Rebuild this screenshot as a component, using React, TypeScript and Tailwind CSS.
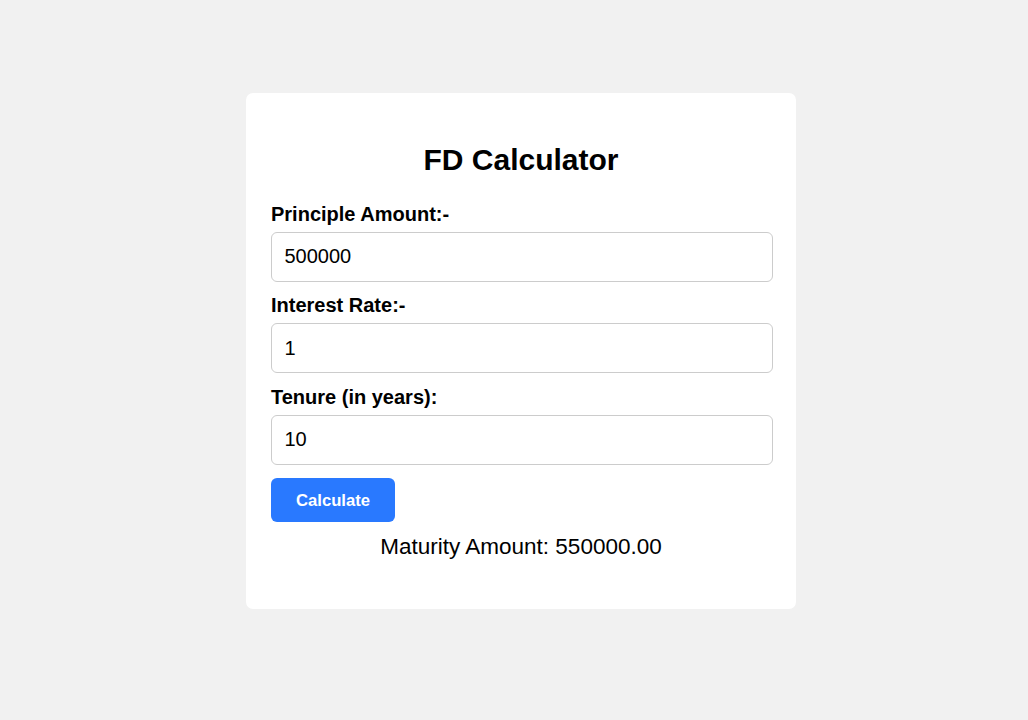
import { useState } from 'react';

export default function App() {
  const [principal, setPrincipal] = useState('500000');
  const [rate, setRate] = useState('1');
  const [tenure, setTenure] = useState('10');
  const [maturity, setMaturity] = useState('550000.00');

  const calculate = () => {
    const p = parseFloat(principal) || 0;
    const r = parseFloat(rate) || 0;
    const t = parseFloat(tenure) || 0;
    setMaturity((p + (p * r * t) / 100).toFixed(2));
  };

  return (
    <div className="min-h-screen w-full bg-[#f1f1f1] pt-[93px] pl-[14px] flex justify-center items-start font-['Liberation_Sans',Arial,sans-serif] text-black">
      <div className="w-[550px] bg-white rounded-[7px] px-[25px] pt-[25px] pb-[49px]">
        <h2 className="text-[30px] leading-[34.5px] font-bold text-center mt-[25px] mb-[25px]">FD Calculator</h2>

        {/* Fields */}
        <label className="block text-[20px] leading-[23px] font-bold mb-[6px]">Principle Amount:-</label>
        <input
          type="number"
          value={principal}
          onChange={(e) => setPrincipal(e.target.value)}
          className="block w-[502px] h-[50px] px-[12.5px] text-[20px] border border-[#cccccc] rounded-[6px] mb-[12.5px] outline-none"
        />

        <label className="block text-[20px] leading-[23px] font-bold mb-[6px]">Interest Rate:-</label>
        <input
          type="number"
          value={rate}
          onChange={(e) => setRate(e.target.value)}
          className="block w-[502px] h-[50px] px-[12.5px] text-[20px] border border-[#cccccc] rounded-[6px] mb-[12.5px] outline-none"
        />

        <label className="block text-[20px] leading-[23px] font-bold mb-[6px]">Tenure (in years):</label>
        <input
          type="number"
          value={tenure}
          onChange={(e) => setTenure(e.target.value)}
          className="block w-[502px] h-[50px] px-[12.5px] text-[20px] border border-[#cccccc] rounded-[6px] mb-[13.5px] outline-none"
        />

        <button
          onClick={calculate}
          className="h-[44px] px-[25px] bg-[#2979ff] text-white text-[16.67px] font-bold rounded-[6px]"
        >
          Calculate
        </button>

        <p className="text-[22.5px] leading-[26px] text-center mt-[12px]">Maturity Amount: {maturity}</p>
      </div>
    </div>
  );
}
